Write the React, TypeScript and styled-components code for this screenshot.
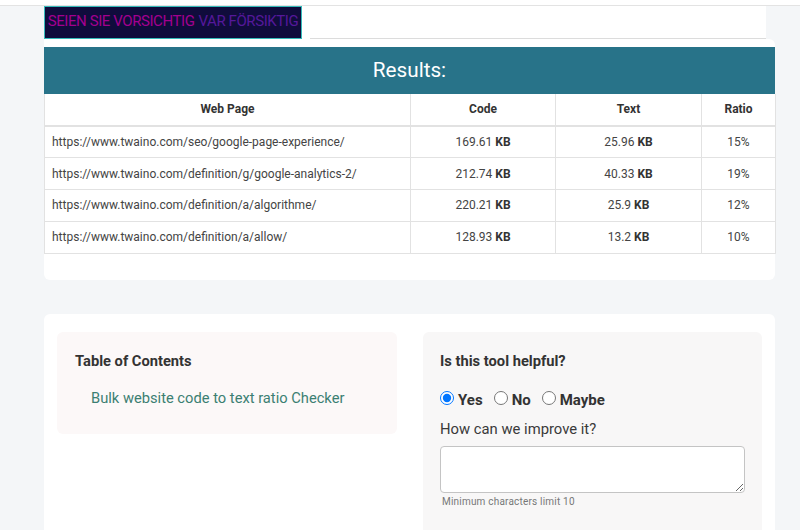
import React from 'react';
import styled, { createGlobalStyle } from 'styled-components';

const GlobalStyle = createGlobalStyle`
    html, body {
        margin: 0;
        padding: 0;
        height: 530px;
        overflow: hidden;
        background: #f4f6f8;
        font-family: Roboto, "Liberation Sans", sans-serif;
        color: #333;
    }
    * {
        box-sizing: border-box;
    }
`;

const TopStrip = styled.div`
    height: 6px;
    background: #fff;
    border-bottom: 1px solid #e3e3e3;
`;

const Page = styled.div`
    width: 731px;
    margin-left: 44px;
`;

const WarningRow = styled.div`
    display: flex;
    width: 722px;
    height: 33px;
    background: #fff;
`;

const Warning = styled.div`
    display: flex;
    align-items: center;
    justify-content: center;
    gap: 4px;
    flex: 0 0 258px;
    padding-bottom: 4px;
    background: #100c3c;
    border: 1px solid #35baba;
    font-size: 15px;
    letter-spacing: -0.42px;
    white-space: nowrap;
`;

const WarningWord = styled.span<{ $color: string }>`
    color: ${props => props.$color};
`;

const WarningInput = styled.div`
    flex: 1;
    margin-left: 8px;
    border-bottom: 1px solid #dcdcdc;
`;

const ResultsCard = styled.section`
    height: 241px;
    padding-top: 8px;
    background: #fff;
    border-radius: 0 6px 6px 6px;
`;

const ResultsTitle = styled.h2`
    height: 47px;
    margin: 0;
    background: #287389;
    color: #fff;
    font-size: 20.7px;
    font-weight: 400;
    line-height: 46px;
    text-align: center;
`;

const Table = styled.table`
    width: 731px;
    table-layout: fixed;
    border-collapse: collapse;
    font-size: 12px;
`;

const HeadCell = styled.th`
    height: 32px;
    padding: 0 0 2px;
    border: 1px solid #e2e2e2;
    border-top: 0;
    border-bottom-width: 2px;
    color: #333;
    font-weight: 700;
    text-align: center;
`;

const Cell = styled.td<{ $url?: boolean }>`
    height: 31.75px;
    padding: 0 0 0 ${props => props.$url ? '7px' : '0'};
    border: 1px solid #e2e2e2;
    color: #444;
    font-size: 12px;
    text-align: ${props => props.$url ? 'left' : 'center'};
    white-space: nowrap;
`;

const Unit = styled.b`
    color: #333;
    font-weight: 700;
`;

const InfoCard = styled.section`
    display: flex;
    align-items: flex-start;
    gap: 26px;
    height: 230px;
    margin-top: 34px;
    padding: 18px 13px 0;
    background: #fff;
    border-radius: 6px 6px 0 0;
`;

const ContentsPanel = styled.div`
    flex: 0 0 340px;
    height: 102px;
    padding: 20px 18px;
    background: #fcf8f8;
    border-radius: 6px;
`;

const PanelTitle = styled.h3`
    margin: 0;
    color: #333;
    font-size: 14.7px;
    font-weight: 700;
    line-height: 18px;
`;

const ContentsLink = styled.a`
    display: block;
    margin: 18px 0 0 16px;
    color: #3b7f72;
    font-size: 14.7px;
    line-height: 20px;
`;

const FeedbackPanel = styled.form`
    flex: 0 0 339px;
    height: 212px;
    padding: 20px 17px;
    background: #f8f7f7;
    border-radius: 6px;
`;

const RadioRow = styled.div`
    display: flex;
    align-items: center;
    margin-top: 19px;
    height: 22px;
`;

const RadioLabel = styled.label`
    display: flex;
    align-items: center;
    margin-right: 11px;
    color: #333;
    font-size: 15px;
    font-weight: 700;
`;

const Radio = styled.input`
    width: 14px;
    height: 14px;
    margin: 0 4px 5px 0;
    accent-color: #0075ff;
`;

const ImproveLabel = styled.label`
    display: block;
    margin-top: 8px;
    color: #3a3a3a;
    font-size: 14.8px;
    line-height: 20px;
`;

const Feedback = styled.textarea`
    display: block;
    width: 305px;
    height: 47px;
    margin-top: 7px;
    background: #fff;
    border: 1px solid #c4c4c4;
    border-radius: 4px;
`;

const Hint = styled.small`
    display: block;
    margin: 2px 0 0 2px;
    color: #777;
    font-size: 10px;
    letter-spacing: 0.2px;
    line-height: 14px;
`;

const rows = [
    { url: 'https://www.twaino.com/seo/google-page-experience/', code: '169.61', text: '25.96', ratio: '15%' },
    { url: 'https://www.twaino.com/definition/g/google-analytics-2/', code: '212.74', text: '40.33', ratio: '19%' },
    { url: 'https://www.twaino.com/definition/a/algorithme/', code: '220.21', text: '25.9', ratio: '12%' },
    { url: 'https://www.twaino.com/definition/a/allow/', code: '128.93', text: '13.2', ratio: '10%' },
];

const App = () => (
    <>
        <GlobalStyle />
        <TopStrip />
        <Page>
            <WarningRow>
                <Warning>
                    <WarningWord $color="#a3008f">SEIEN SIE VORSICHTIG</WarningWord>
                    <WarningWord $color="#55189a">VAR FÖRSIKTIG</WarningWord>
                </Warning>
                <WarningInput />
            </WarningRow>
            <ResultsCard>
                <ResultsTitle>Results:</ResultsTitle>
                <Table>
                    <colgroup>
                        <col width={366} />
                        <col width={145} />
                        <col width={146} />
                        <col width={74} />
                    </colgroup>
                    <thead>
                        <tr>
                            <HeadCell>Web Page</HeadCell>
                            <HeadCell>Code</HeadCell>
                            <HeadCell>Text</HeadCell>
                            <HeadCell>Ratio</HeadCell>
                        </tr>
                    </thead>
                    <tbody>
                        {rows.map((row) => (
                            <tr key={row.url}>
                                <Cell $url>{row.url}</Cell>
                                <Cell>{row.code} <Unit>KB</Unit></Cell>
                                <Cell>{row.text} <Unit>KB</Unit></Cell>
                                <Cell>{row.ratio}</Cell>
                            </tr>
                        ))}
                    </tbody>
                </Table>
            </ResultsCard>
            <InfoCard>
                <ContentsPanel>
                    <PanelTitle>Table of Contents</PanelTitle>
                    <ContentsLink>Bulk website code to text ratio Checker</ContentsLink>
                </ContentsPanel>
                <FeedbackPanel>
                    <PanelTitle>Is this tool helpful?</PanelTitle>
                    <RadioRow>
                        <RadioLabel><Radio type="radio" name="helpful" defaultChecked />Yes</RadioLabel>
                        <RadioLabel><Radio type="radio" name="helpful" />No</RadioLabel>
                        <RadioLabel><Radio type="radio" name="helpful" />Maybe</RadioLabel>
                    </RadioRow>
                    <ImproveLabel>How can we improve it?</ImproveLabel>
                    <Feedback />
                    <Hint>Minimum characters limit 10</Hint>
                </FeedbackPanel>
            </InfoCard>
        </Page>
    </>
);

export default App;
